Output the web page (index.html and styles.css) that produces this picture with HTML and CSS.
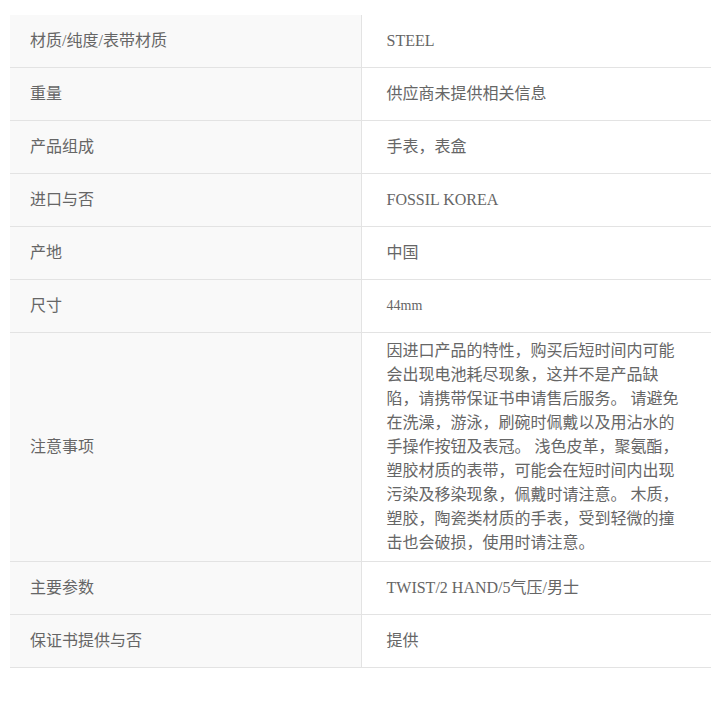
FILE: index.html
```html
<!DOCTYPE html>
<html lang="zh-CN">
<head>
  <meta charset="UTF-8" />
  <title>商品信息</title>
  <link rel="stylesheet" href="styles.css">
</head>
<body>
  <table class="spec-table">
    <tr><th>材质/纯度/表带材质</th><td>STEEL</td></tr>
    <tr><th>重量</th><td>供应商未提供相关信息</td></tr>
    <tr><th>产品组成</th><td>手表，表盒</td></tr>
    <tr><th>进口与否</th><td>FOSSIL KOREA</td></tr>
    <tr><th>产地</th><td>中国</td></tr>
    <tr><th>尺寸</th><td class="small">44mm</td></tr>
    <tr class="long">
      <th>注意事项</th>
      <td>因进口产品的特性，购买后短时间内可能会出现电池耗尽现象，这并不是产品缺陷，请携带保证书申请售后服务。 请避免在洗澡，游泳，刷碗时佩戴以及用沾水的手操作按钮及表冠。 浅色皮革，聚氨酯，塑胶材质的表带，可能会在短时间内出现污染及移染现象，佩戴时请注意。 木质，塑胶，陶瓷类材质的手表，受到轻微的撞击也会破损，使用时请注意。</td>
    </tr>
    <tr><th>主要参数</th><td>TWIST/2 HAND/5气压/男士</td></tr>
    <tr><th>保证书提供与否</th><td>提供</td></tr>
  </table>
</body>
</html>
```

FILE: styles.css
```css
body {
  margin: 15px 10px 8px 10px;
  background: #fff;
  font-family: "Liberation Serif", "Noto Sans CJK SC", serif;
  color: #666;
}

.spec-table {
  width: 701px;
  border-collapse: collapse;
  table-layout: fixed;
}

.spec-table th,
.spec-table td {
  height: 52px;
  padding: 0 28px 0 25px;
  border-bottom: 1px solid #e3e3e3;
  font-size: 16px;
  line-height: 24px;
  font-weight: normal;
  text-align: left;
  vertical-align: middle;
}

.spec-table th {
  width: 351px;
  box-sizing: border-box;
  padding-left: 20px;
  background-color: #f9f9f9;
  border-right: 1px solid #e3e3e3;
}

.spec-table .small {
  font-size: 14px;
}

.spec-table .long td {
  height: auto;
  padding-top: 6px;
  padding-bottom: 6px;
}
```
